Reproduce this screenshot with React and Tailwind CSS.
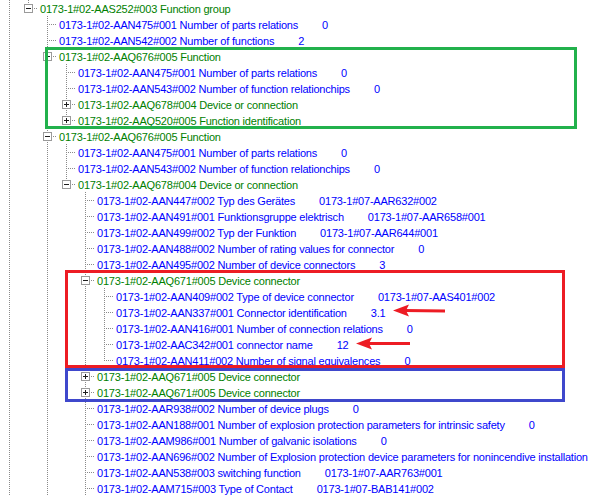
import React from "react";

const rows = [
  [1, "minus", "g", "0173-1#02-AAS252#003 Function group"],
  [2, "leaf", "b", "0173-1#02-AAN475#001 Number of parts relations", "0"],
  [2, "leaf", "b", "0173-1#02-AAN542#002 Number of functions", "2"],
  [2, "minus", "g", "0173-1#02-AAQ676#005 Function"],
  [3, "leaf", "b", "0173-1#02-AAN475#001 Number of parts relations", "0"],
  [3, "leaf", "b", "0173-1#02-AAN543#002 Number of function relationchips", "0"],
  [3, "plus", "g", "0173-1#02-AAQ678#004 Device or connection"],
  [3, "plus", "g", "0173-1#02-AAQ520#005 Function identification"],
  [2, "minus", "g", "0173-1#02-AAQ676#005 Function", null, true],
  [3, "leaf", "b", "0173-1#02-AAN475#001 Number of parts relations", "0"],
  [3, "leaf", "b", "0173-1#02-AAN543#002 Number of function relationchips", "0"],
  [3, "minus", "g", "0173-1#02-AAQ678#004 Device or connection"],
  [4, "leaf", "b", "0173-1#02-AAN447#002 Typ des Gerätes", "0173-1#07-AAR632#002"],
  [4, "leaf", "b", "0173-1#02-AAN491#001 Funktionsgruppe elektrisch", "0173-1#07-AAR658#001"],
  [4, "leaf", "b", "0173-1#02-AAN499#002 Typ der Funktion", "0173-1#07-AAR644#001"],
  [4, "leaf", "b", "0173-1#02-AAN488#002 Number of rating values for connector", "0"],
  [4, "leaf", "b", "0173-1#02-AAN495#002 Number of device connectors", "3"],
  [4, "minus", "g", "0173-1#02-AAQ671#005 Device connector"],
  [5, "leaf", "b", "0173-1#02-AAN409#002 Type of device connector", "0173-1#07-AAS401#002"],
  [5, "leaf", "b", "0173-1#02-AAN337#001 Connector identification", "3.1"],
  [5, "leaf", "b", "0173-1#02-AAN416#001 Number of connection relations", "0"],
  [5, "leaf", "b", "0173-1#02-AAC342#001 connector name", "12"],
  [5, "leaf", "b", "0173-1#02-AAN411#002 Number of signal equivalences", "0"],
  [4, "plus", "g", "0173-1#02-AAQ671#005 Device connector"],
  [4, "plus", "g", "0173-1#02-AAQ671#005 Device connector"],
  [4, "leaf", "b", "0173-1#02-AAR938#002 Number of device plugs", "0"],
  [4, "leaf", "b", "0173-1#02-AAN188#001 Number of explosion protection parameters for intrinsic safety", "0"],
  [4, "leaf", "b", "0173-1#02-AAM986#001 Number of galvanic isolations", "0"],
  [4, "leaf", "b", "0173-1#02-AAN696#002 Number of Explosion protection device parameters for nonincendive installation"],
  [4, "leaf", "b", "0173-1#02-AAN538#003 switching function", "0173-1#07-AAR763#001"],
  [4, "leaf", "b", "0173-1#02-AAM715#003 Type of Contact", "0173-1#07-BAB141#002", true],
];

const levels = rows.map((r) => r[0]);

function hasNext(i) {
  if (rows[i][5]) return true;
  const L = levels[i];
  for (let j = i + 1; j < rows.length; j++) {
    if (levels[j] < L) return false;
    if (levels[j] === L) return true;
  }
  return false;
}

function ancestorCont(i, k) {
  if (k === 0) return true;
  for (let j = i - 1; j >= 0; j--) {
    if (levels[j] === k) return hasNext(j);
    if (levels[j] < k) return false;
  }
  return false;
}

const xOf = (L) => 9 + 19 * L;
const DOT = "#8a8a8a";

function Lines({ i }) {
  const L = levels[i];
  const kind = rows[i][1];
  const w = xOf(L) + 12;
  const els = [];
  for (let k = 0; k < L; k++) {
    if (ancestorCont(i, k)) {
      els.push(
        <line key={"v" + k} x1={xOf(k) + 0.5} y1={0} x2={xOf(k) + 0.5} y2={16} stroke={DOT} strokeDasharray="1 1" />
      );
    }
  }
  const x = xOf(L);
  els.push(<line key="own1" x1={x + 0.5} y1={0} x2={x + 0.5} y2={8} stroke={DOT} strokeDasharray="1 1" />);
  if (hasNext(i)) {
    els.push(<line key="own2" x1={x + 0.5} y1={8} x2={x + 0.5} y2={16} stroke={DOT} strokeDasharray="1 1" />);
  }
  els.push(<line key="h" x1={x} y1={8.5} x2={x + 10} y2={8.5} stroke={DOT} strokeDasharray="1 1" />);
  if (kind !== "leaf") {
    els.push(<rect key="box" x={x - 3.5} y={4.5} width={8} height={8} fill="#ffffff" stroke="#9a9a9a" />);
    els.push(<line key="m" x1={x - 2} y1={8.5} x2={x + 3} y2={8.5} stroke="#1e1e1e" />);
    if (kind === "plus") {
      els.push(<line key="p" x1={x + 0.5} y1={6} x2={x + 0.5} y2={11} stroke="#1e1e1e" />);
    }
  }
  return (
    <svg width={w} height={16} className="shrink-0" shapeRendering="crispEdges">
      {els}
    </svg>
  );
}

export default function App() {
  return (
    <div
      className="relative w-[590px] h-[497px] overflow-hidden bg-white"
      style={{ fontFamily: '"Liberation Sans", Arial, sans-serif' }}
    >
      <div className="flex flex-col">
        {rows.map((r, i) => (
          <div key={i} className="flex h-[16px] items-start whitespace-nowrap">
            <Lines i={i} />
            <span
              className={
                "pt-[1px] text-[11px] leading-[16px] tracking-[-0.2px] " +
                (r[2] === "g" ? "text-[#008000]" : "text-[#0000ff]")
              }
            >
              {r[3]}
              {r[4] ? <span className="ml-[24px]">{r[4]}</span> : null}
            </span>
          </div>
        ))}
      </div>

      <div className="absolute left-[45px] top-[47px] w-[532px] h-[82px] border-[3px] border-[#22b14c]" />
      <div className="absolute left-[65px] top-[270px] w-[500px] h-[98px] border-[3px] border-[#ed1c24]" />
      <div className="absolute left-[65px] top-[368px] w-[500px] h-[34px] border-[3px] border-[#3f48cc]" />

      <svg className="absolute left-0 top-0" width={590} height={497}>
        <line x1={404} y1={310.5} x2={445} y2={311} stroke="#ed1c24" strokeWidth={3} />
        <polygon points="393,310.5 409,304.5 406,310.5 409,316.5" fill="#ed1c24" />
        <line x1={367} y1={343.5} x2={410} y2={343.5} stroke="#ed1c24" strokeWidth={3} />
        <polygon points="356,343.5 372,337.5 369,343.5 372,349.5" fill="#ed1c24" />
      </svg>
    </div>
  );
}
